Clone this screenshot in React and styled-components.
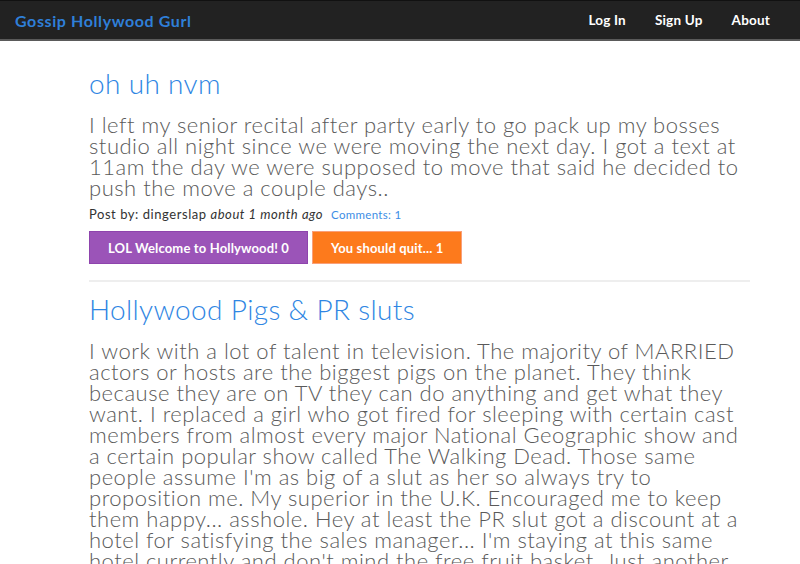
import React from "react";
import styled, { createGlobalStyle } from "styled-components";

const Global = createGlobalStyle`
  html, body { margin: 0; padding: 0; background: #fff; }
  body { font-family: Lato, "Open Sans", sans-serif; overflow: hidden; }
`;

const Nav = styled.nav`
  height: 38px;
  background: #222;
  border-bottom: 2px solid #5a5a5a;
  border-top: 1px solid #111;
  display: flex;
  align-items: center;
  justify-content: space-between;
  padding: 0 15px;
`;

const Brand = styled.a`
  color: #2f7fd8;
  font-size: 16px;
  font-weight: 700;
  letter-spacing: 0.6px;
  text-decoration: none;
`;

const NavLinks = styled.div`
  display: flex;
  gap: 29px;
  padding-right: 15px;
`;

const NavLink = styled.a`
  color: #fff;
  font-size: 13.5px;
  font-weight: 700;
  letter-spacing: 0.2px;
  text-decoration: none;
`;

const Main = styled.main`
  padding: 25px 0 0 89px;
  width: 661px;
`;

const Post = styled.article`
  border-bottom: ${(p) => (p.$last ? "none" : "2px solid #eee")};
  padding-bottom: 16px;
  margin-bottom: 10px;
`;

const Title = styled.h2`
  margin: 0 0 14px;
  color: #2f86e3;
  font-size: 28px;
  font-weight: 300;
  letter-spacing: 0.35px;
  line-height: 34px;
`;

const Body = styled.p`
  margin: 0 0 8px;
  color: #5a5a5a;
  font-size: 22px;
  font-weight: 300;
  letter-spacing: 0.5px;
  line-height: 21px;
`;

const Meta = styled.div`
  font-size: 13px;
  letter-spacing: 0.55px;
  color: #333;
  margin-bottom: 9px;
  em { font-style: italic; }
`;

const Comments = styled.a`
  color: #3c8de5;
  font-size: 11.5px;
  letter-spacing: 0.3px;
  margin-left: 8px;
  text-decoration: none;
`;

const Buttons = styled.div`
  display: flex;
  gap: 4px;
`;

const VoteButton = styled.button`
  height: 33px;
  padding: 0 18px;
  border: 1px solid ${(p) => p.$border};
  background: ${(p) => p.$bg};
  color: #fff;
  font-family: inherit;
  font-size: 13px;
  font-weight: 700;
  letter-spacing: 0.15px;
  cursor: pointer;
`;

export default function App() {
  return (
    <>
      <Global />
      <Nav>
        <Brand href="#">Gossip Hollywood Gurl</Brand>
        <NavLinks>
          <NavLink href="#">Log In</NavLink>
          <NavLink href="#">Sign Up</NavLink>
          <NavLink href="#">About</NavLink>
        </NavLinks>
      </Nav>
      <Main>
        <Post>
          <Title>oh uh nvm</Title>
          <Body>
            I left my senior recital after party early to go pack up my bosses studio all night since we were moving the next day. I got a text at 11am the day we were supposed to move that said he decided to push the move a couple days..
          </Body>
          <Meta>
            Post by: dingerslap <em>about 1 month ago</em>
            <Comments href="#">Comments: 1</Comments>
          </Meta>
          <Buttons>
            <VoteButton $bg="#9b54b8" $border="#8e44ad">LOL Welcome to Hollywood! 0</VoteButton>
            <VoteButton $bg="#fd7a1c" $border="#f9a07a">You should quit... 1</VoteButton>
          </Buttons>
        </Post>
        <Post $last>
          <Title>Hollywood Pigs &amp; PR sluts</Title>
          <Body>
            I work with a lot of talent in television. The majority of MARRIED actors or hosts are the biggest pigs on the planet. They think because they are on TV they can do anything and get what they want. I replaced a girl who got fired for sleeping with certain cast members from almost every major National Geographic show and a certain popular show called The Walking Dead. Those same people assume I'm as big of a slut as her so always try to proposition me. My superior in the U.K. Encouraged me to keep them happy... asshole. Hey at least the PR slut got a discount at a hotel for satisfying the sales manager... I'm staying at this same hotel currently and don't mind the free fruit basket. Just another day in Hollywood.
          </Body>
        </Post>
      </Main>
    </>
  );
}
